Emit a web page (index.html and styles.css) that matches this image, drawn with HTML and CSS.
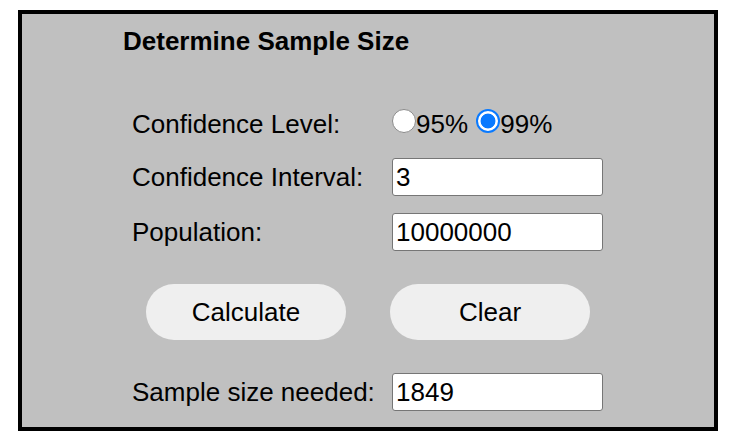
FILE: index.html
```html
<!DOCTYPE html>
<html>
<head>
<meta charset="utf-8">
<title>Determine Sample Size</title>
<link rel="stylesheet" href="styles.css">
</head>
<body>
<div class="panel">
  <h1 class="title">Determine Sample Size</h1>
  <div class="form">
    <div class="row row-level">
      <span class="label">Confidence Level:</span>
      <span class="options">
        <label class="opt"><input class="radio" type="radio" name="level" value="95">95%</label>
        <label class="opt"><input class="radio" type="radio" name="level" value="99" checked>99%</label>
      </span>
    </div>
    <div class="row row-interval">
      <span class="label">Confidence Interval:</span>
      <input class="field" type="text" value="3">
    </div>
    <div class="row row-pop">
      <span class="label">Population:</span>
      <input class="field" type="text" value="10000000">
    </div>
  </div>
  <div class="buttons">
    <button class="btn" type="button">Calculate</button>
    <button class="btn" type="button">Clear</button>
  </div>
  <div class="form">
    <div class="row row-result">
      <span class="label">Sample size needed:</span>
      <input class="field" type="text" value="1849">
    </div>
  </div>
</div>
</body>
</html>
```

FILE: styles.css
```css
html, body {
  margin: 0;
  padding: 0;
  background: #ffffff;
}

body {
  font-family: "Liberation Sans", Arial, Helvetica, sans-serif;
  color: #000;
}

.panel {
  box-sizing: border-box;
  width: 700px;
  margin: 10px 0 0 18px;
  border: 4px solid #000;
  background: #c0c0c0;
  padding: 12px 0 16px 0;
}

.title {
  margin: 0 0 0 101px;
  font-size: 26px;
  font-weight: bold;
  line-height: 30px;
}

.form {
  margin-left: 110px;
  display: flex;
  flex-direction: column;
}

.row {
  display: grid;
  grid-template-columns: 260px 211px;
  align-items: center;
}

.row-level {
  margin-top: 53px;
  height: 30px;
  align-items: start;
}

.row-interval {
  margin-top: 19px;
}

.row-pop {
  margin-top: 17px;
}

.row-result {
  margin-top: 33px;
}

.label {
  font-size: 26px;
  line-height: 30px;
  white-space: nowrap;
}

.options {
  font-size: 26px;
  line-height: 30px;
  white-space: nowrap;
}

.opt {
  margin-right: 1px;
}

.radio {
  -webkit-appearance: none;
  appearance: none;
  box-sizing: border-box;
  width: 24px;
  height: 24px;
  margin: 0;
  vertical-align: baseline;
  border-radius: 50%;
  border: 1px solid #8a8a8a;
  background: #fff;
}

.radio:checked {
  border: 2px solid #0a7aff;
  background: radial-gradient(circle, #0a7aff 0, #0a7aff 7px, #ffffff 7.8px);
}

.field {
  box-sizing: border-box;
  width: 211px;
  height: 38px;
  margin: 0;
  padding: 0 3px;
  border: 1px solid #767676;
  border-radius: 3px;
  background: #fff;
  font-family: "Liberation Sans", Arial, Helvetica, sans-serif;
  font-size: 26px;
  color: #000;
}

.buttons {
  display: flex;
  justify-content: center;
  gap: 44px;
  margin-top: 33px;
}

.btn {
  width: 200px;
  height: 56px;
  border: none;
  border-radius: 28px;
  background: #efefef;
  font-family: "Liberation Sans", Arial, Helvetica, sans-serif;
  font-size: 26px;
  color: #000;
  padding: 0;
}
```
